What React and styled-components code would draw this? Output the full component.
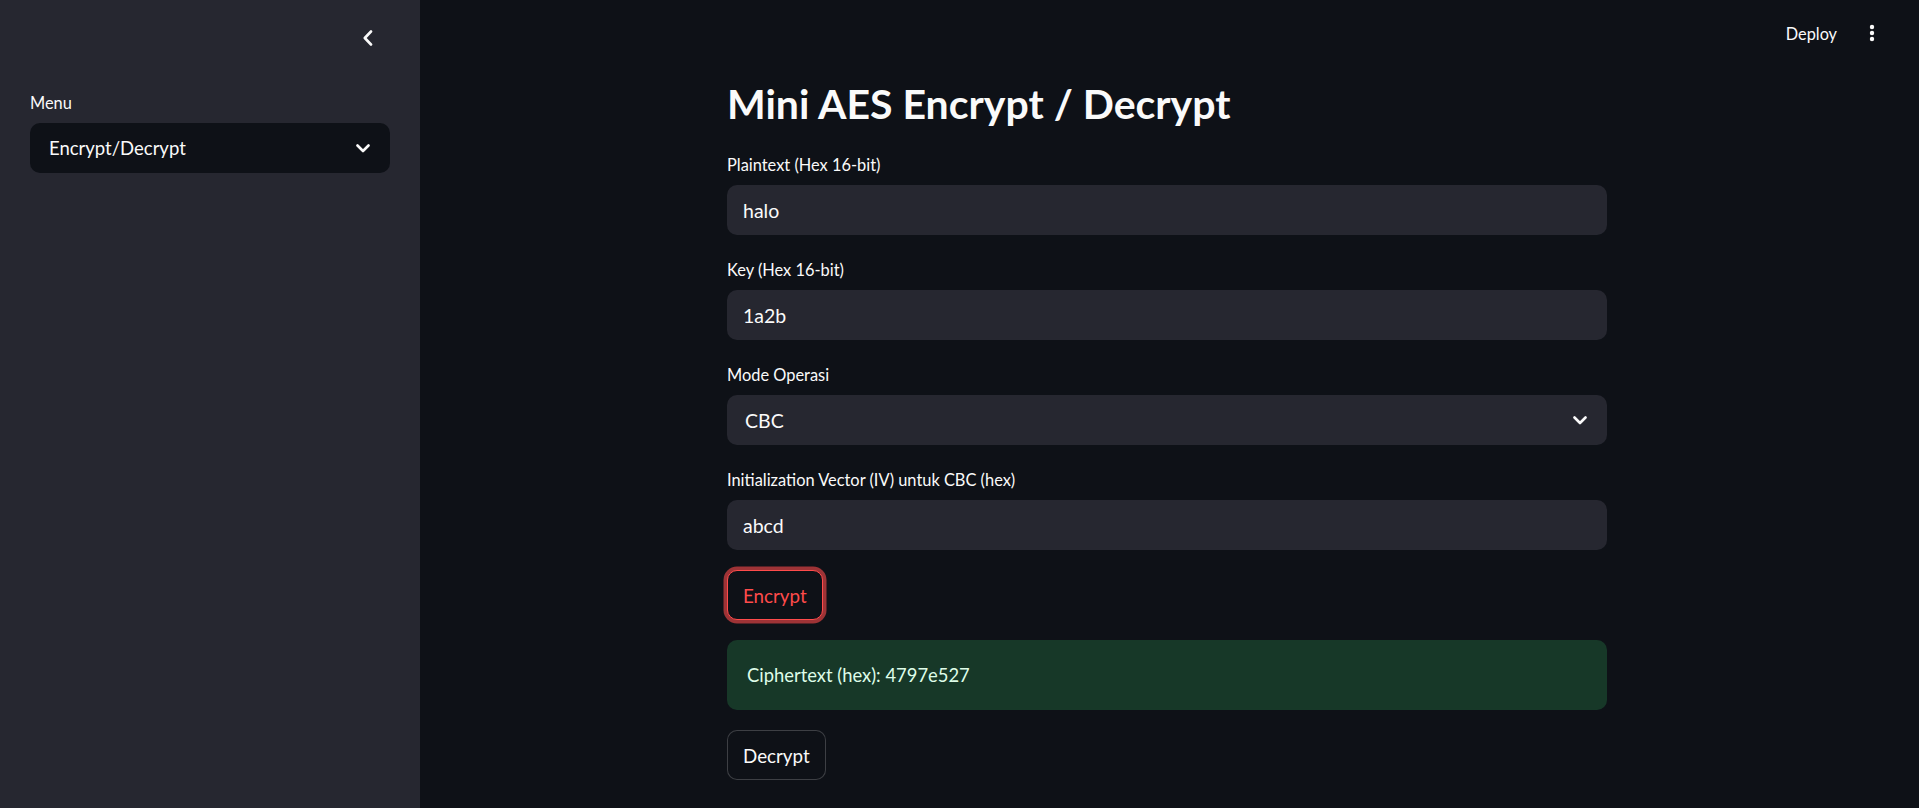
import styled, { createGlobalStyle } from "styled-components";

const GlobalStyle = createGlobalStyle`
  html, body {
    margin: 0;
    padding: 0;
    background: #0e1117;
    color: #fafafa;
    font-family: "Lato", "Noto Sans", sans-serif;
  }
  * {
    box-sizing: border-box;
  }
`;

const Layout = styled.div`
  display: flex;
  height: 100vh;
  overflow: hidden;
`;

const Sidebar = styled.aside`
  width: 420px;
  flex-shrink: 0;
  background: #262730;
  padding: 0 30px;
  display: flex;
  flex-direction: column;
`;

const SidebarTop = styled.div`
  height: 76px;
  margin-bottom: 12px;
  display: flex;
  align-items: center;
  justify-content: flex-end;
  padding-right: 6px;
`;

const IconButton = styled.button`
  width: 32px;
  height: 32px;
  padding: 0;
  border: none;
  background: transparent;
  color: #fafafa;
  display: flex;
  align-items: center;
  justify-content: center;
  cursor: pointer;
`;

const Main = styled.main`
  flex: 1;
  display: flex;
  flex-direction: column;
`;

const Header = styled.header`
  height: 66px;
  display: flex;
  align-items: center;
  justify-content: flex-end;
  gap: 9px;
  padding-right: 31px;
`;

const DeployButton = styled.button`
  border: none;
  background: transparent;
  color: #fafafa;
  font-family: inherit;
  font-size: 16.3px;
  padding: 0 10px;
  height: 36px;
  cursor: pointer;
`;

const Content = styled.div`
  width: 880px;
  margin-left: 307px;
  display: flex;
  flex-direction: column;
  gap: 20px;
`;

const Title = styled.h1`
  margin: 13px 0 2px;
  font-size: 41px;
  line-height: 1.2;
  font-weight: 700;
`;

const Field = styled.div`
  display: flex;
  flex-direction: column;
  gap: 5px;
`;

const Label = styled.label`
  height: 30px;
  line-height: 30px;
  font-size: 16.4px;
  color: #fafafa;
`;

const TextInput = styled.input`
  height: 50px;
  width: 100%;
  border: none;
  border-radius: 10px;
  background: #262730;
  color: #fafafa;
  font-family: inherit;
  font-size: 19.5px;
  padding: 0 16px;
  outline: none;
`;

const Select = styled.div`
  height: 50px;
  border-radius: 10px;
  background: ${(p) => (p.$dark ? "#0e1117" : "#262730")};
  display: flex;
  align-items: center;
  justify-content: space-between;
  padding: 0 20px 0 ${(p) => (p.$dark ? "19px" : "18px")};
  font-size: ${(p) => (p.$dark ? "18.5px" : "19.5px")};
  color: #fafafa;
`;

const Button = styled.button`
  align-self: flex-start;
  height: 50px;
  padding: 0 15px;
  border-radius: 10px;
  font-family: inherit;
  font-size: 18.8px;
  background: #0e1117;
  cursor: pointer;
  color: ${(p) => (p.$focused ? "#ff4b4b" : "#fafafa")};
  border: 1px solid
    ${(p) => (p.$focused ? "#ff4b4b" : "rgba(250, 250, 250, 0.2)")};
  box-shadow: ${(p) =>
    p.$focused ? "0 0 0 3.5px rgba(255, 75, 75, 0.6)" : "none"};
`;

const Success = styled.div`
  border-radius: 10px;
  background: rgba(61, 213, 109, 0.2);
  color: #dffde9;
  padding: 20px;
  font-size: 18.4px;
  line-height: 30px;
`;

function ChevronDown() {
  return (
    <svg width="14" height="9" viewBox="0 0 14 9" fill="none">
      <path d="M1.5 1.5 7 7l5.5-5.5" stroke="#fafafa" strokeWidth="2.6" strokeLinecap="round" strokeLinejoin="round" />
    </svg>
  );
}

function ChevronLeft() {
  return (
    <svg width="10" height="16" viewBox="0 0 10 16" fill="none">
      <path d="M8 1.5 1.8 8 8 14.5" stroke="#fafafa" strokeWidth="2.6" strokeLinecap="round" strokeLinejoin="round" />
    </svg>
  );
}

function Kebab() {
  return (
    <svg width="6" height="18" viewBox="0 0 6 18">
      <circle cx="3" cy="3" r="2.2" fill="#fafafa" />
      <circle cx="3" cy="9" r="2.2" fill="#fafafa" />
      <circle cx="3" cy="15" r="2.2" fill="#fafafa" />
    </svg>
  );
}

export default function App() {
  return (
    <>
      <GlobalStyle />
      <Layout>
        <Sidebar>
          <SidebarTop>
            <IconButton aria-label="Collapse sidebar">
              <ChevronLeft />
            </IconButton>
          </SidebarTop>
          <Field>
            <Label>Menu</Label>
            <Select $dark>
              <span>Encrypt/Decrypt</span>
              <ChevronDown />
            </Select>
          </Field>
        </Sidebar>
        <Main>
          <Header>
            <DeployButton>Deploy</DeployButton>
            <IconButton aria-label="Main menu">
              <Kebab />
            </IconButton>
          </Header>
          <Content>
            <Title>Mini AES Encrypt / Decrypt</Title>
            <Field>
              <Label>Plaintext (Hex 16-bit)</Label>
              <TextInput defaultValue="halo" />
            </Field>
            <Field>
              <Label>Key (Hex 16-bit)</Label>
              <TextInput defaultValue="1a2b" />
            </Field>
            <Field>
              <Label>Mode Operasi</Label>
              <Select>
                <span>CBC</span>
                <ChevronDown />
              </Select>
            </Field>
            <Field>
              <Label>Initialization Vector (IV) untuk CBC (hex)</Label>
              <TextInput defaultValue="abcd" />
            </Field>
            <Button $focused>Encrypt</Button>
            <Success>Ciphertext (hex): 4797e527</Success>
            <Button>Decrypt</Button>
          </Content>
        </Main>
      </Layout>
    </>
  );
}
